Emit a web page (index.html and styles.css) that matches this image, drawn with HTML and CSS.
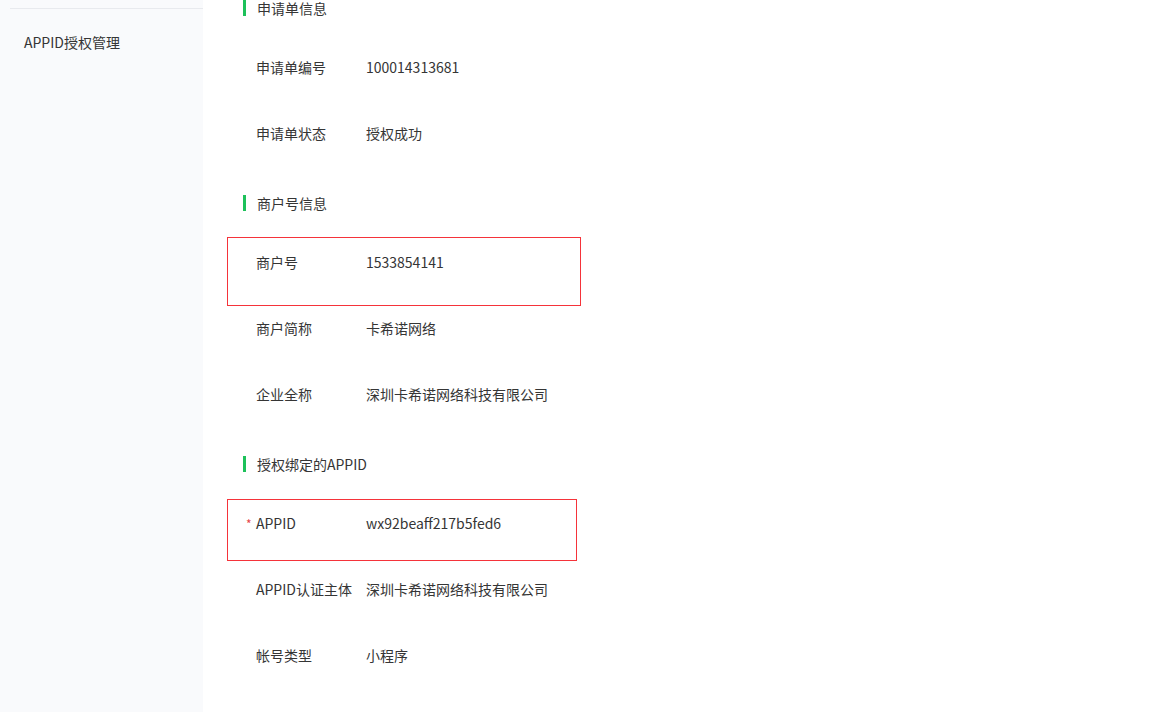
FILE: index.html
```html
<!DOCTYPE html>
<html lang="zh-CN">
<head>
  <meta charset="UTF-8" />
  <title>APPID授权管理</title>
  <link rel="stylesheet" href="styles.css">
</head>
<body>
  <div class="layout">
    <div class="sidebar">
      <div class="sidebar-line"></div>
      <div class="menu-item">APPID授权管理</div>
    </div>
    <div class="main">
      <div class="section-title">申请单信息</div>
      <div class="row"><span class="label">申请单编号</span><span class="value">100014313681</span></div>
      <div class="row"><span class="label">申请单状态</span><span class="value">授权成功</span></div>

      <div class="section-title">商户号信息</div>
      <div class="row marked marked-mch"><span class="label">商户号</span><span class="value">1533854141</span></div>
      <div class="row"><span class="label">商户简称</span><span class="value">卡希诺网络</span></div>
      <div class="row"><span class="label">企业全称</span><span class="value">深圳卡希诺网络科技有限公司</span></div>

      <div class="section-title">授权绑定的APPID</div>
      <div class="row marked marked-appid"><span class="label required">APPID</span><span class="value">wx92beaff217b5fed6</span></div>
      <div class="row"><span class="label">APPID认证主体</span><span class="value">深圳卡希诺网络科技有限公司</span></div>
      <div class="row"><span class="label">帐号类型</span><span class="value">小程序</span></div>
    </div>
  </div>
</body>
</html>
```

FILE: styles.css
```css
body {
  margin: 0;
  padding: 0;
  font-family: "Noto Sans CJK SC", "Noto Sans", sans-serif;
  font-size: 14px;
  color: #353535;
  background: #fff;
  overflow: hidden;
}
.layout {
  display: flex;
  height: 712px;
}
.sidebar {
  width: 203px;
  flex-shrink: 0;
  background-color: #f9fafc;
}
.sidebar-line {
  height: 1px;
  margin: 8px 0 0 10px;
  background-color: #e8eaee;
}
.menu-item {
  padding-left: 24px;
  margin-top: 24px;
  line-height: 18px;
  color: #353535;
}
.main {
  flex: 1;
  padding-left: 24px;
  margin-top: -21px;
}
.section-title {
  display: flex;
  align-items: center;
  height: 18px;
  padding: 20px 0 25px 16px;
  line-height: 18px;
}
.section-title::before {
  content: "";
  width: 3px;
  height: 16px;
  background-color: #1dc15a;
  margin-right: 11px;
}
.row {
  position: relative;
  display: flex;
  height: 50px;
  padding-top: 16px;
  line-height: 18px;
}
.label {
  position: relative;
  width: 110px;
  padding-left: 29px;
  flex-shrink: 0;
}
.required::before {
  content: "*";
  position: absolute;
  left: 19px;
  top: 1px;
  color: #e6454a;
  font-size: 12px;
}
.marked::after {
  content: "";
  position: absolute;
  left: 0;
  border: 1px solid #f5333a;
}
.marked-mch::after {
  top: 0;
  width: 352px;
  height: 67px;
}
.marked-appid::after {
  top: 1px;
  width: 348px;
  height: 60px;
}
```
